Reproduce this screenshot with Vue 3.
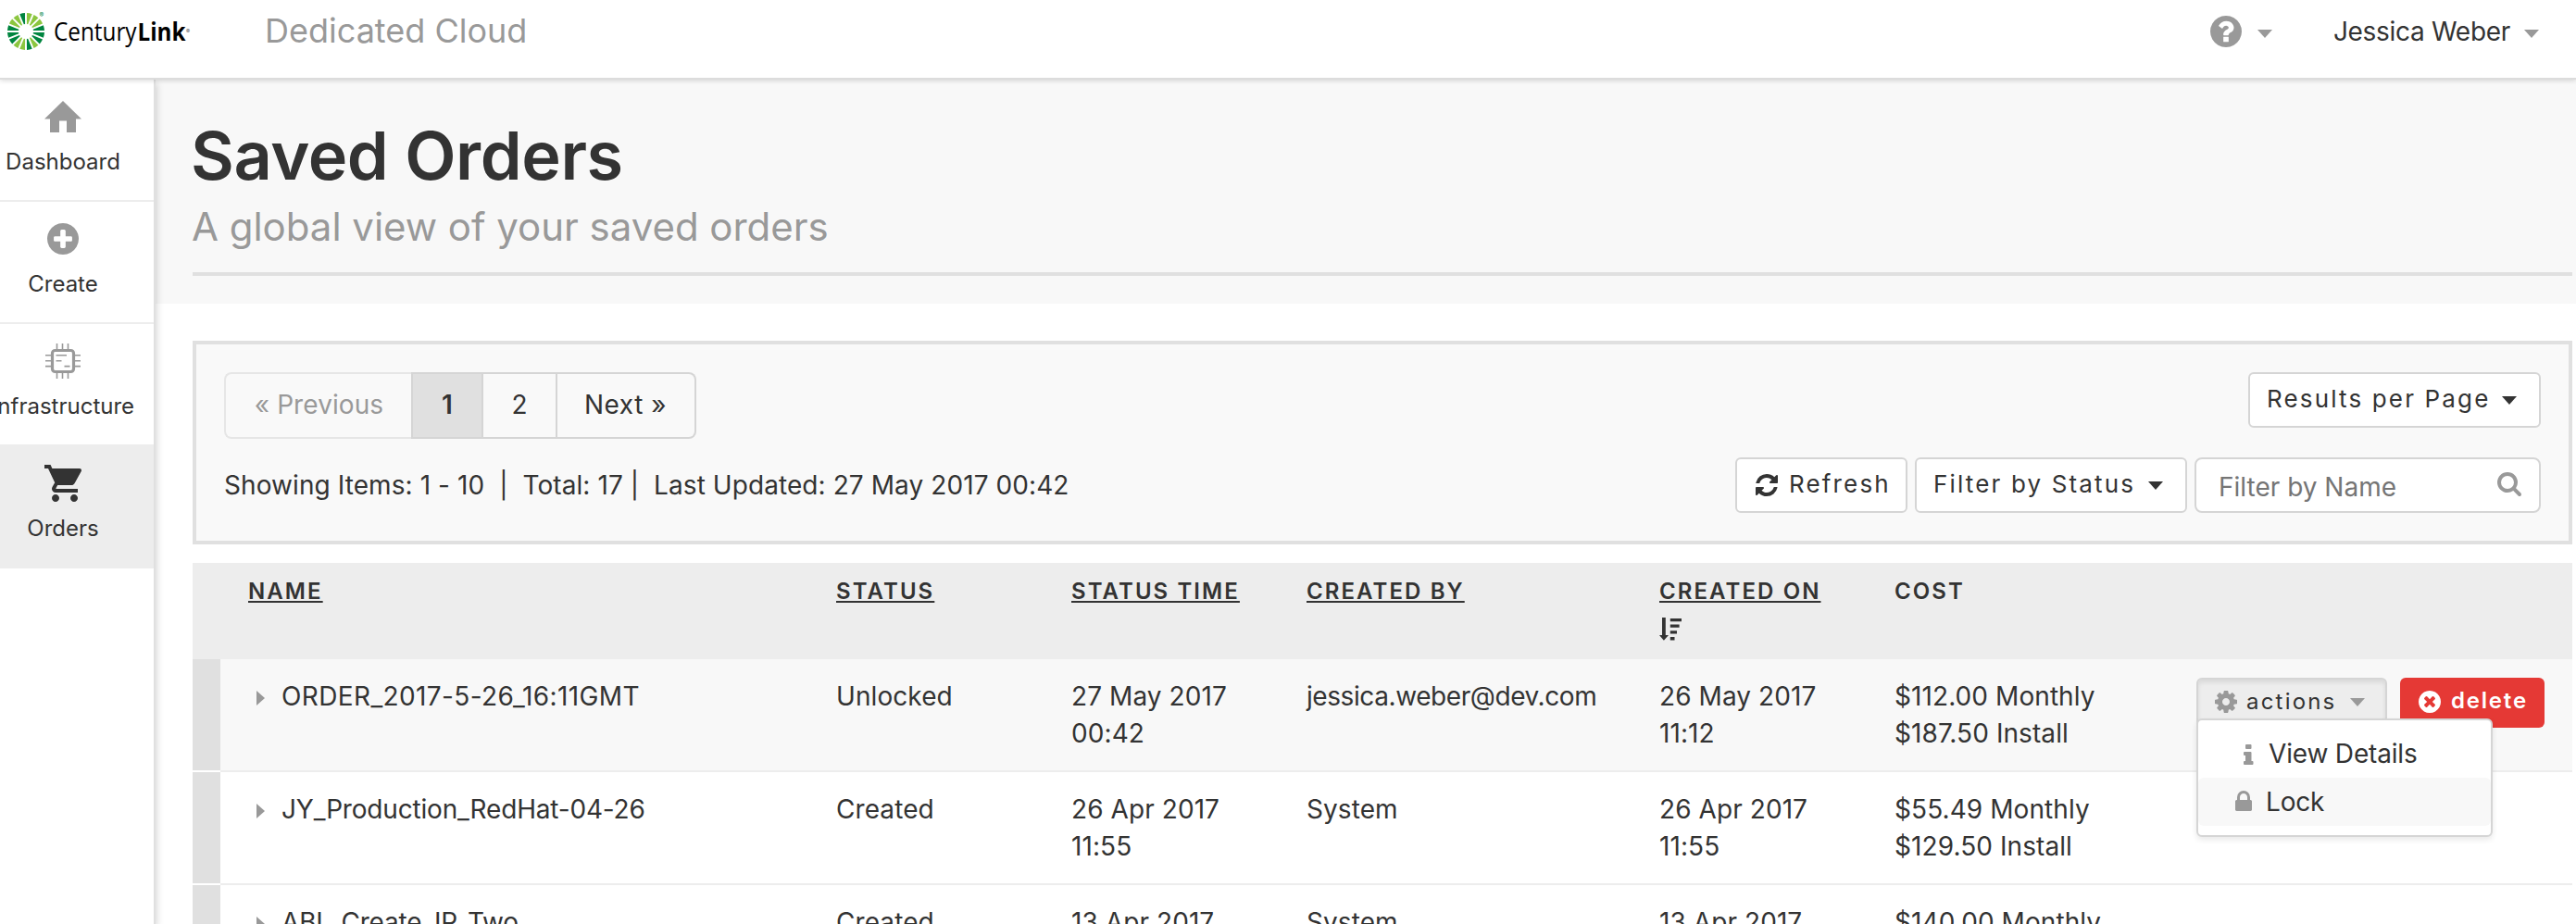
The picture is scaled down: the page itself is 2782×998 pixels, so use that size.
<script setup>
const disc = 'M1664 896q0 209-103 385.5t-279.5 279.5-385.5 103-385.5-103-279.5-279.5-103-385.5 103-385.5 279.5-279.5 385.5-103 385.5 103 279.5 279.5 103 385.5z'
const icons = {
  question: 'M1024 1376v-192q0-14-9-23t-23-9h-192q-14 0-23 9t-9 23v192q0 14 9 23t23 9h192q14 0 23-9t9-23zm256-672q0-88-55.5-163t-138.5-116-170-41q-243 0-371 213-15 24 8 42l132 100q7 6 19 6 16 0 25-12 53-68 86-92 34-24 86-24 48 0 85.5 26t37.5 59q0 38-20 61t-68 45q-63 28-115.5 86.5t-52.5 125.5v36q0 14 9 23t23 9h192q14 0 23-9t9-23q0-19 21.5-49.5t54.5-49.5q32-18 49-28.5t46-35 44.5-48 28-60.5 12.5-81z' + disc,
  plus: 'M1344 960v-128q0-26-19-45t-45-19h-256v-256q0-26-19-45t-45-19h-128q-26 0-45 19t-19 45v256h-256q-26 0-45 19t-19 45v128q0 26 19 45t45 19h256v256q0 26 19 45t45 19h128q26 0 45-19t19-45v-256h256q26 0 45-19t19-45z' + disc,
  times: 'M1277 1122q0-26-19-45l-181-181 181-181q19-19 19-45 0-27-19-46l-90-90q-19-19-46-19-26 0-45 19l-181 181-181-181q-19-19-45-19-27 0-46 19l-90 90q-19 19-19 46 0 26 19 45l181 181-181 181q-19 19-19 45 0 27 19 46l90 90q19 19 46 19 26 0 45-19l181-181 181 181q19 19 45 19 27 0 46-19l90-90q19-19 19-46z' + disc,
  refresh: 'M1639 1056q0 5-1 7-64 268-268 434.5t-478 166.5q-146 0-282.5-55t-243.5-157l-129 129q-19 19-45 19t-45-19-19-45v-448q0-26 19-45t45-19h448q26 0 45 19t19 45-19 45l-137 137q71 66 161 102t187 36q134 0 250-65t186-179q11-17 53-117 8-23 30-23h192q13 0 22.5 9.5t9.5 22.5zm25-800v448q0 26-19 45t-45 19h-448q-26 0-45-19t-19-45 19-45l138-138q-148-137-349-137-134 0-250 65t-186 179q-11 17-53 117-8 23-30 23h-199q-13 0-22.5-9.5t-9.5-22.5v-7q65-268 270-434.5t480-166.5q146 0 284 55.5t245 156.5l130-129q19-19 45-19t45 19 19 45z',
  cog: 'M1152 896q0-106-75-181t-181-75-181 75-75 181 75 181 181 75 181-75 75-181zm512-109v222q0 12-8 23t-20 13l-185 28q-19 54-39 91 35 50 107 138 10 12 10 25t-9 23q-27 37-99 108t-94 71q-12 0-26-9l-138-108q-44 23-91 38-16 136-29 186-7 28-36 28h-222q-14 0-24.5-8.5t-11.5-21.5l-28-184q-49-16-90-37l-141 107q-10 9-25 9-14 0-25-11-126-114-165-168-7-10-7-23 0-12 8-23 15-21 51-66.5t54-70.5q-27-50-41-99l-183-27q-13-2-21-12.5t-8-23.5v-222q0-12 8-23t19-13l186-28q14-46 39-92-40-57-107-138-10-12-10-24 0-10 9-23 26-36 98.5-107.5t94.5-71.5q13 0 26 10l138 107q44-23 91-38 16-136 29-186 7-28 36-28h222q14 0 24.5 8.5t11.5 21.5l28 184q49 16 90 37l142-107q9-9 24-9 13 0 25 10 129 119 165 170 7 8 7 22 0 12-8 23-15 21-51 66.5t-54 70.5q26 50 41 98l183 28q13 2 21 12.5t8 23.5z',
  search: 'M1216 832q0-185-131.5-316.5t-316.5-131.5-316.5 131.5-131.5 316.5 131.5 316.5 316.5 131.5 316.5-131.5 131.5-316.5zm512 832q0 52-38 90t-90 38q-54 0-90-38l-343-342q-179 124-399 124-143 0-273.5-55.5t-225-150-150-225-55.5-273.5 55.5-273.5 150-225 225-150 273.5-55.5 273.5 55.5 225 150 150 225 55.5 273.5q0 220-124 399l343 343q37 37 37 90z',
  lock: 'M640 768h512v-192q0-106-75-181t-181-75-181 75-75 181v192zm832 96v576q0 40-28 68t-68 28h-960q-40 0-68-28t-28-68v-576q0-40 28-68t68-28h32v-192q0-184 132-316t316-132 316 132 132 316v192h32q40 0 68 28t28 68z'
}

// Logo rays, counter-clockwise from the east: d = dark green, l = light green
const rays = [...'dllldlldddlldldd'].map((shade, i) => {
  const at = (r, deg) => {
    const a = (deg * Math.PI) / 180
    return `${(20 + r * Math.cos(a)).toFixed(2)} ${(20 - r * Math.sin(a)).toFixed(2)}`
  }
  const mid = 11.25 + i * 22.5
  return {
    fill: shade === 'd' ? '#00853f' : '#8cc63f',
    d: `M${at(8, mid - 4.5)}L${at(20, mid - 8.4)}A20 20 0 0 0 ${at(20, mid + 8.4)}L${at(8, mid + 4.5)}z`
  }
})

const columns = [
  { label: 'NAME', sortable: true },
  { label: 'STATUS', sortable: true },
  { label: 'STATUS TIME', sortable: true },
  { label: 'CREATED BY', sortable: true },
  { label: 'CREATED ON', sortable: true, sorted: true },
  { label: 'COST' }
]
const orders = [
  { name: 'ORDER_2017-5-26_16:11GMT', status: 'Unlocked', time: ['27 May 2017', '00:42'], by: 'jessica.weber@dev.com', on: ['26 May 2017', '11:12'], cost: ['$112.00 Monthly', '$187.50 Install'], open: true },
  { name: 'JY_Production_RedHat-04-26', status: 'Created', time: ['26 Apr 2017', '11:55'], by: 'System', on: ['26 Apr 2017', '11:55'], cost: ['$55.49 Monthly', '$129.50 Install'] },
  { name: 'ABL_Create_IP_Two', status: 'Created', time: ['13 Apr 2017'], by: 'System', on: ['13 Apr 2017'], cost: ['$140.00 Monthly'] }
]
</script>

<template>
  <div class="app">
    <header class="topbar">
      <svg class="logo" width="206" height="60" viewBox="0 0 206 60">
        <g transform="translate(8 14)"><path v-for="(r, i) in rays" :key="i" :d="r.d" :fill="r.fill" /></g>
        <text x="42.5" y="19" class="logo-reg">®</text>
        <text x="58" y="43.5" class="logo-text" textLength="89.500" lengthAdjust="spacingAndGlyphs">Century</text>
        <text x="148.500" y="43.5" class="logo-text strong" textLength="52" lengthAdjust="spacingAndGlyphs">Link</text>
        <text x="201" y="36" class="logo-dot">®</text>
      </svg>
      <span class="product">Dedicated Cloud</span>
      <div class="account">
        <svg class="muted help" width="34" height="34" viewBox="128 128 1536 1536"><path fill-rule="evenodd" :d="icons.question" /></svg>
        <i class="caret muted-caret help-caret"></i>
        <span class="user">Jessica Weber</span>
        <i class="caret muted-caret"></i>
      </div>
    </header>

    <div class="body">
      <nav class="side">
        <a class="item">
          <span class="ico"><svg width="40" height="34" viewBox="0 0 40 34"><path d="M20 0L40 19.500H34V34H24V21.500H16V34H6V19.500H0z" /></svg></span>
          <span class="lbl">Dashboard</span>
        </a>
        <a class="item">
          <span class="ico"><svg width="34" height="34" viewBox="128 128 1536 1536"><path fill-rule="evenodd" :d="icons.plus" /></svg></span>
          <span class="lbl">Create</span>
        </a>
        <a class="item">
          <span class="ico">
            <svg class="chip" width="38" height="38" viewBox="0 0 38 38">
              <rect x="7.500" y="7.500" width="23" height="23" rx="3" stroke-width="3.200" />
              <path stroke-width="1.600" d="M12.500 0V6M18.500 0V6M24.500 0V6M12.500 32V38M18.500 32V38M24.500 32V38M0 12.800H6M0 18.800H6M0 24.600H6M32 12.800H38M32 18.800H38M32 24.600H38M11.500 12.800H23M11.500 18.800H17.500M20.500 24.600H26.500" />
            </svg>
          </span>
          <span class="lbl">Infrastructure</span>
        </a>
        <a class="item active">
          <span class="ico"><svg width="40" height="40" viewBox="1 2 20 20"><path d="M7 18c-1.100 0-1.990.9-1.990 2S5.900 22 7 22s2-.9 2-2-.9-2-2-2zM1 2v2h2l3.600 7.590-1.350 2.450c-.16.28-.25.61-.25.96 0 1.100.9 2 2 2h12v-2H7.420c-.14 0-.25-.11-.25-.25l.03-.12.9-1.630h7.450c.75 0 1.410-.41 1.750-1.030l3.580-6.490c.08-.14.12-.31.12-.48 0-.55-.45-1-1-1H5.210l-.94-2H1zm16 16c-1.100 0-1.990.9-1.990 2s.89 2 1.990 2 2-.9 2-2-.9-2-2-2z" /></svg></span>
          <span class="lbl">Orders</span>
        </a>
      </nav>

      <main class="main">
        <section class="hero">
          <h1>Saved Orders</h1>
          <p>A global view of your saved orders</p>
          <div class="rule"></div>
        </section>

        <section class="panel">
          <div class="left">
            <div class="pager">
              <span class="page prev">« Previous</span>
              <span class="page current">1</span>
              <span class="page two">2</span>
              <span class="page next">Next »</span>
            </div>
            <div class="summary">Showing Items: 1 - 10&nbsp; |&nbsp; Total: 17&nbsp;|&nbsp; Last Updated: 27 May 2017 00:42</div>
          </div>
          <div class="right">
            <button class="btn results"><span>Results per Page</span><i class="caret"></i></button>
            <div class="tools">
              <button class="btn refresh"><svg width="24" height="24" viewBox="128 128 1536 1536"><path :d="icons.refresh" /></svg><span>Refresh</span></button>
              <button class="btn status"><span>Filter by Status</span><i class="caret"></i></button>
              <div class="search"><span>Filter by Name</span><svg class="muted" width="26" height="26" viewBox="64 128 1664 1664"><path fill-rule="evenodd" :d="icons.search" /></svg></div>
            </div>
          </div>
        </section>

        <section class="table">
          <div class="row head">
            <div></div>
            <div v-for="c in columns" :key="c.label" class="th">
              <span :class="{ link: c.sortable }">{{ c.label }}</span>
              <svg v-if="c.sorted" class="sort" width="24" height="25" viewBox="0 0 24 25"><path d="M3 0H6.800V19H10L4.900 24.800L0 19H3zM11.800 1H24V4.200H11.800zM11.800 7.500H21.600V10.800H11.800zM11.800 14.200H19V17.600H11.800zM11.800 21H16.500V24.500H11.800z" /></svg>
            </div>
          </div>
          <div v-for="o in orders" :key="o.name" class="row order" :class="{ open: o.open }">
            <div class="bar"></div>
            <div class="name"><i class="twist"></i><span>{{ o.name }}</span></div>
            <div>{{ o.status }}</div>
            <div><p v-for="t in o.time" :key="t">{{ t }}</p></div>
            <div :class="{ email: o.open }">{{ o.by }}</div>
            <div><p v-for="t in o.on" :key="t">{{ t }}</p></div>
            <div><p v-for="t in o.cost" :key="t">{{ t }}</p></div>
            <div v-if="o.open" class="acts">
              <div class="actions">
                <svg class="muted" width="24" height="24" viewBox="128 128 1536 1536"><path fill-rule="evenodd" :d="icons.cog" /></svg>
                <span>actions</span><i class="caret muted-caret"></i>
                <div class="menu">
                  <div class="mi"><svg class="muted info" width="11" height="22" viewBox="0 0 11 22"><path d="M3 0H7.500Q8.500 0 8.500 1V4Q8.500 5 7.500 5H3Q2 5 2 4V1Q2 0 3 0zM1 8H7.500Q8.500 8 8.500 9V18H9.500Q10.500 18 10.500 19V21Q10.500 22 9.500 22H1Q0 22 0 21V19Q0 18 1 18H2V12H1Q0 12 0 11V9Q0 8 1 8z" /></svg><span>View Details</span></div>
                  <div class="mi hover"><svg class="muted lock" width="18" height="22" viewBox="320 128 1152 1408"><path fill-rule="evenodd" :d="icons.lock" /></svg><span>Lock</span></div>
                </div>
              </div>
              <div class="delete"><svg width="24" height="24" viewBox="128 128 1536 1536"><path fill-rule="evenodd" :d="icons.times" /></svg><span>delete</span></div>
            </div>
          </div>
        </section>
      </main>
    </div>
  </div>
</template>

<style>
html, body { margin: 0; background: #fff; overflow: hidden; }
</style>

<style scoped>
* { box-sizing: border-box; }
.app { height: 998px; overflow: hidden; display: flex; flex-direction: column; font: 28px/40px Inter, "Liberation Sans", sans-serif; color: #333; background: #fff; letter-spacing: 0.08px; }
svg { display: block; flex: none; fill: currentColor; }
p, h1 { margin: 0; }
.muted { color: #999; }
.caret { flex: none; width: 0; height: 0; border: 8px solid transparent; border-top: 9px solid #333; border-bottom: 0; }
.muted-caret { border-top-color: #999; }

.topbar { position: relative; z-index: 2; flex: none; display: flex; height: 86px; background: #fff; border-bottom: 2px solid #dcdcdc; box-shadow: 0 1px 5px rgba(0, 0, 0, 0.16); }
.logo-text { font: 400 26.5px "Open Sans", sans-serif; fill: #000; letter-spacing: 0; }
.logo-text.strong { font-weight: 700; }
.logo-reg { font: 7px Inter, sans-serif; fill: #00853f; }
.logo-dot { font: 6px Inter, sans-serif; fill: #555; }
.product { margin-left: 80px; font-size: 36px; line-height: 44px; padding-top: 11px; color: #999; letter-spacing: 0; }
.account { margin-left: auto; padding-right: 40px; display: flex; align-items: flex-start; }
.help { margin-top: 17px; }
.account .caret { margin-top: 32px; }
.help-caret { margin-left: 17px; }
.user { margin: 14px 15px 0 66px; letter-spacing: -0.3px; }

.body { flex: 1; display: flex; min-height: 0; }
.side { position: relative; z-index: 1; flex: none; width: 198px; margin-left: -30px; background: #fff; border-right: 2px solid #e0e0e0; box-shadow: 1px 4px 8px rgba(0, 0, 0, 0.18); }
.item { display: flex; flex-direction: column; align-items: center; height: 132px; padding-top: 20px; border-bottom: 2px solid #ededed; color: #333; }
.item.active { height: 134px; margin-top: -2px; padding-top: 22px; background: #ededed; }
.ico { display: flex; align-items: center; height: 40px; color: #999; }
.active .ico { color: #333; }
.chip { fill: none; stroke: currentColor; }
.lbl { margin-top: 14px; font-size: 24px; line-height: 30px; letter-spacing: 0; white-space: nowrap; }

.main { flex: 1; min-width: 0; display: flex; flex-direction: column; }
.hero { flex: none; height: 242px; padding: 42px 4px 0 40px; background: #f8f8f8; }
h1 { margin-left: -2px; font-size: 72px; line-height: 80px; font-weight: 600; letter-spacing: -0.4px; }
.hero p { margin: 12px 0 0 -1px; font-size: 42px; line-height: 50px; color: #999; letter-spacing: -0.03px; }
.rule { margin-top: 24px; height: 4px; background: #e0e0e0; }

.panel { flex: none; height: 220px; margin: 40px 4px 0 40px; padding: 30px; display: flex; justify-content: space-between; border: 4px solid #e0e0e0; background: #f9f9f9; }
.pager { display: flex; height: 72px; width: 510px; }
.page { display: flex; align-items: center; justify-content: center; border: 2px solid #d5d5d5; border-left-width: 0; padding-bottom: 2px; }
.prev { width: 202px; border-width: 2px 0 2px 2px; border-color: #e6e6e6; border-radius: 8px 0 0 8px; color: #999; padding-left: 1px; }
.current { width: 78px; border-left-width: 2px; background: #e0e0e0; font-weight: 600; }
.two { width: 80px; }
.next { width: 150px; border-radius: 0 8px 8px 0; padding-right: 1px; letter-spacing: 0.5px; }
.summary { margin-top: 30px; white-space: nowrap; }

.right { display: flex; flex-direction: column; align-items: flex-end; gap: 32px; }
.tools { display: flex; gap: 8px; }
.btn { display: flex; align-items: flex-start; height: 60px; padding: 0 24px 0 18px; border: 2px solid #d5d5d5; border-radius: 6px; background: #fff; color: #333; font: 26px/53px Inter, "Liberation Sans", sans-serif; letter-spacing: 2.150px; white-space: nowrap; }
.btn .caret { margin: 24px 0 0 auto; }
.results { width: 316px; }
.status { width: 294px; }
.refresh { width: 186px; padding: 0 0 0 20px; gap: 12px; }
.refresh svg { margin-top: 16px; }
.search { display: flex; justify-content: space-between; width: 374px; height: 60px; padding: 2px 19px 0 24px; border: 2px solid #d5d5d5; border-radius: 8px; background: #fff; color: #757575; line-height: 56px; letter-spacing: 0; }
.search svg { margin-top: 12px; }

.table { margin: 20px 4px 0 40px; }
.row { display: grid; grid-template-columns: 30px 665px 254px 254px 381px 254px 326px 1fr; }
.head { height: 104px; padding-top: 11px; background: #ededed; }
.th { font-size: 24px; font-weight: 600; letter-spacing: 2.080px; }
.th:nth-child(2) { padding-left: 30px; }
.link { text-decoration: underline; text-decoration-thickness: 2px; text-underline-offset: 2px; text-decoration-skip-ink: none; }
.sort { margin-top: 8px; }
.order { height: 122px; background: #fff; }
.order > div { padding-top: 20px; border-bottom: 2px solid #ededed; }
.order > .bar { background: #e0e0e0 padding-box; border-bottom-color: #fff; }
.order:not(.open) > div:last-child { grid-column: 7 / 9; }
.order.open { background: #f8f8f8; }
.name { display: flex; letter-spacing: -0.18px; }
.open .name { letter-spacing: 0.38px; }
.twist { width: 0; height: 0; margin: 14px 18px 0 39px; border: 8px solid transparent; border-left: 9px solid #999; border-right: 0; }
.email { letter-spacing: -0.42px; }

.acts { display: flex; gap: 14px; }
.actions { position: relative; display: flex; width: 206px; height: 54px; padding: 0 0 0 18px; border: 2px solid #d5d5d5; border-radius: 6px; background: #ededed; box-shadow: inset 0 3px 5px rgba(0, 0, 0, 0.09); font-size: 24px; line-height: 47px; letter-spacing: 2.200px; }
.actions > svg { margin-top: 12px; }
.actions > span { margin-left: 10px; }
.actions > .caret { margin: 20px 0 0 14px; }
.delete { display: flex; width: 156px; height: 54px; padding-left: 20px; border-radius: 6px; background: #e53935; color: #fff; font-size: 24px; font-weight: 600; line-height: 50px; letter-spacing: 1.800px; }
.delete svg { margin: 14px 11px 0 0; }
.menu { position: absolute; top: 42px; left: -2px; width: 320px; height: 128px; padding: 10px 0; border: 2px solid #d5d5d5; border-radius: 6px; background: #fff; box-shadow: 0 3px 6px rgba(0, 0, 0, 0.09); font-size: 28px; letter-spacing: -0.17px; }
.mi { display: flex; height: 52px; line-height: 52px; border-radius: 6px; }
.hover { background: #f8f8f8; }
.mi .info { margin: 16px 16px 0 49px; }
.mi .lock { margin: 14px 15px 0 40px; }
</style>
